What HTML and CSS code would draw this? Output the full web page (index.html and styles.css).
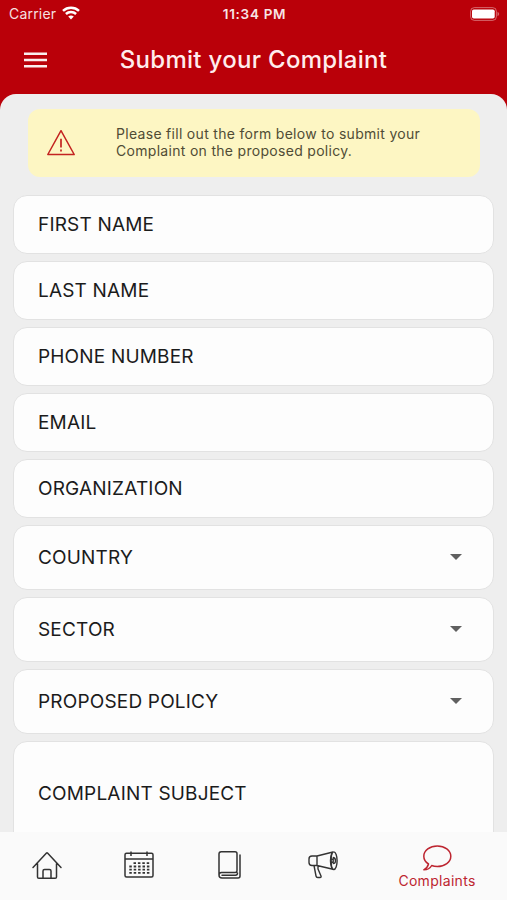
FILE: index.html
```html
<!DOCTYPE html>
<html lang="en">
<head>
<meta charset="utf-8">
<title>Submit your Complaint</title>
<link rel="stylesheet" href="styles.css">
</head>
<body>
<div class="app">
  <div class="status">
    <div class="status-left">
      <span class="carrier">Carrier</span>
      <svg class="wifi" width="18" height="14" viewBox="0 0 18 14" fill="none" stroke="#fff" stroke-width="2.500"><path d="M1 4.900C5.500.700 12.500.700 17 4.900M3.900 8C6.800 5.300 11.200 5.300 14.100 8"/><path d="M9 13.500L6.200 10.600Q9 8.200 11.800 10.600Z" fill="#fff" stroke="none"/></svg>
    </div>
    <span class="time">11:34 PM</span>
    <div class="status-right">
      <svg width="31" height="14" viewBox="0 0 31 14"><rect x="1.600" y=".6" width="25.800" height="12.800" rx="3.800" fill="none" stroke="#fff" stroke-opacity=".4"/><rect x="3" y="2.500" width="22.700" height="9" rx="1.800" fill="#fff"/><path d="M28.500 4.800Q30.200 5.500 30.200 7T28.500 9.200Z" fill="#fff" fill-opacity=".4"/></svg>
    </div>
  </div>
  <header class="header">
    <svg class="menu" width="23" height="16" viewBox="0 0 23 16" fill="#fff" fill-opacity=".93"><path d="M0 .5h23v2.500H0zM0 6.700h23v2.500H0zM0 12.900h23v2.500H0z"/></svg>
    <h1 class="title">Submit your Complaint</h1>
  </header>
  <main class="panel">
    <div class="notice">
      <svg class="warning" width="30" height="28" viewBox="0 0 30 28" fill="none" stroke="#c32320" stroke-width="1.500" stroke-linejoin="round"><path d="M15 1.700L28.200 25.500H1.800Z"/><path d="M15 9.800v8.700M15 20.600v1.900" stroke-width="1.700"/></svg>
      <p class="notice-text">Please fill out the form below to submit your<br>Complaint on the proposed policy.</p>
    </div>
    <form class="form">
      <div class="field"><span>FIRST NAME</span></div>
      <div class="field"><span>LAST NAME</span></div>
      <div class="field"><span>PHONE NUMBER</span></div>
      <div class="field"><span>EMAIL</span></div>
      <div class="field"><span>ORGANIZATION</span></div>
      <div class="field select"><span>COUNTRY</span><i class="caret"></i></div>
      <div class="field select"><span>SECTOR</span><i class="caret"></i></div>
      <div class="field select"><span>PROPOSED POLICY</span><i class="caret"></i></div>
      <div class="field area"><span>COMPLAINT SUBJECT</span></div>
    </form>
  </main>
  <nav class="tabs">
    <div class="tab"><svg width="32" height="32" viewBox="0 0 32 32" fill="none" stroke="#333" stroke-width="1.500" stroke-linecap="round" stroke-linejoin="round"><path d="M2 17.500L15.500 3Q16 2.500 16.500 3L30 17.500M6.500 13.500V27Q6.500 28.300 7.800 28.300H24.200Q25.500 28.300 25.500 27V13.500M12 28V21Q12 19.500 13.500 19.500H18.500Q20 19.500 20 21V28"/></svg></div>
    <div class="tab"><svg width="32" height="32" viewBox="0 0 32 32" fill="none" stroke="#333" stroke-width="1.500"><rect x="2" y="3.200" width="28" height="23.800" rx="1.500"/><path d="M2 9H30M8 1.500V6M24 1.500V6"/><path d="M10.500 13.200H26.500M6.300 16.500H26.500M6.300 19.700H26.500M6.300 22.900H26.500" stroke-width="1.800" stroke-dasharray="2.500 1.900"/></svg></div>
    <div class="tab"><svg width="32" height="32" viewBox="0 0 32 32" fill="none" stroke="#333" stroke-width="1.500" stroke-linecap="round" stroke-linejoin="round"><path d="M5 25V4Q5 1.800 7.200 1.800H21Q23 1.800 23 3.800V20.500Q23 22.500 21 22.500H7.500Q5 22.500 5 25Q5 28 8 28H24Q26 28 26 26V5M8 25.200H21.500Q23.500 25.200 23.500 23"/></svg></div>
    <div class="tab"><svg class="megaphone" width="32" height="32" viewBox="0 0 32 32" fill="none" stroke="#333" stroke-width="1.400" stroke-linejoin="round"><path d="M10 6H5Q2 6 2 9V12.500Q2 15.500 5 15.500H10ZM10 6L26 2M10 15.500L26 19.200M7 15.500L9 26Q9.300 27.500 10.700 27.500H13Q14.500 27.500 14 26L11 19V15.800"/><ellipse cx="26.800" cy="10.700" rx="3.300" ry="8.800"/><path d="M25 2.500Q23.200 10 25 18.800M25.700 7.500Q28.500 7.700 28.500 10.700T25.700 13.500M24.800 9.200H26.200V12.200H24.800"/></svg></div>
    <div class="tab active"><svg width="32" height="28" viewBox="0 0 32 28" fill="none" stroke="#bd2530" stroke-width="1.500" stroke-linejoin="round"><path d="M7.500 20C4.300 18 2.800 15.200 2.800 12.300C2.800 6.500 8.900 1.900 16.300 1.900S29.800 6.500 29.800 12.300S23.700 22.500 16.300 22.500C14.300 22.500 12.400 22.200 10.700 21.500C9 24.500 6 25.800 2.800 25.800C5.500 24.300 7 22.500 7.500 20Z"/></svg><span class="tab-label">Complaints</span></div>
  </nav>
</div>
</body>
</html>
```
FILE: styles.css
```css
* { box-sizing: border-box; }
body { margin: 0; font-family: Inter, "Liberation Sans", sans-serif; }
.app { width: 507px; height: 900px; display: flex; flex-direction: column; overflow: hidden; background: #ba0009; }
.status { flex: none; height: 27px; display: grid; grid-template-columns: 1fr auto 1fr; align-items: center; padding: 0 7px 0 9px; color: #fff; }
.status-left { display: flex; align-items: center; gap: 6px; }
.carrier { font-size: 14px; line-height: 27px; letter-spacing: .2px; opacity: .88; }
.wifi { margin-top: -1px; }
.time { font-size: 13.500px; font-weight: 600; letter-spacing: .7px; opacity: .9; }
.status-right { display: flex; justify-content: flex-end; }
.header { flex: none; height: 67px; display: grid; grid-template-columns: 1fr auto 1fr; align-items: center; padding: 0 24px 1px; }
.title { grid-column: 2; margin: 0; font-size: 24px; line-height: 30px; font-weight: 550; letter-spacing: .3px; color: #ffeded; }
.panel { flex: 1; min-height: 0; overflow: hidden; background: #eee; border-radius: 16px 16px 0 0; padding: 15px 13px 0; }
.notice { height: 68px; margin: 0 14px 18px 15px; padding: 0 18px; border-radius: 12px; background: #fdf6c3; display: flex; align-items: center; gap: 40px; }
.notice-text { margin: 0; padding-bottom: 2px; font-size: 14px; line-height: 17.500px; letter-spacing: .3px; color: #504c35; white-space: nowrap; }
.form { display: flex; flex-direction: column; gap: 7px; }
.field { flex: none; height: 59px; border: 1px solid #e2e2e2; border-radius: 14px; background: #fdfdfd; padding: 0 31px 0 24px; display: flex; align-items: center; justify-content: space-between; font-size: 19px; letter-spacing: .18px; color: #1b1b1b; }
.select { height: 65px; }
.area { height: 105px; }
.caret { margin-bottom: 2px; border: 6px solid transparent; border-top-color: #606060; border-bottom: 0; }
.tabs { flex: none; height: 68px; background: #fafafa; display: flex; padding: 0 1px; }
.tab { flex: 1; display: flex; flex-direction: column; align-items: center; justify-content: center; }
.megaphone { margin-left: 2px; }
.active { flex: 0 0 138px; justify-content: flex-start; padding-top: 12px; }
.tab-label { font-size: 14px; line-height: 17px; letter-spacing: .3px; color: #bd2530; }
```
